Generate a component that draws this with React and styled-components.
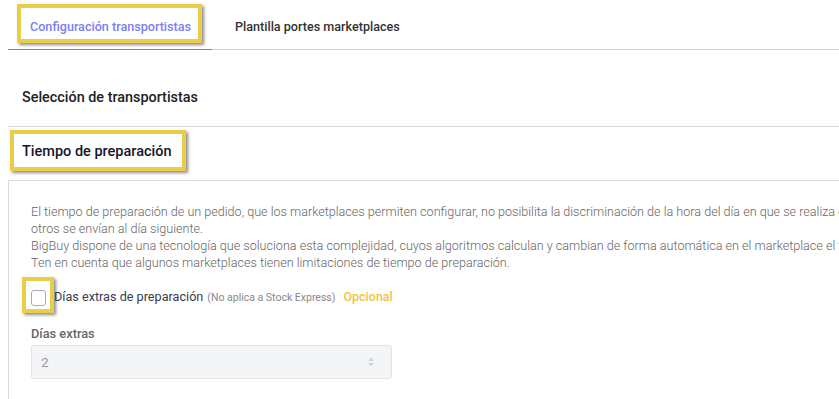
import React from "react";
import styled, { createGlobalStyle } from "styled-components";

const Global = createGlobalStyle`
  html, body { margin: 0; padding: 0; background: #fff; overflow: hidden; }
  body { font-family: Roboto, "Noto Sans", Arial, sans-serif; }
`;

const Page = styled.div`
  padding-left: 8px;
  width: 831px;
`;

const TabBar = styled.div`
  display: flex;
  align-items: flex-start;
  height: 49px;
  border-bottom: 1px solid #cfcfcf;
`;

const Tab = styled.div`
  box-sizing: border-box;
  height: 50px;
  padding: ${(p) => (p.$active ? "4px 0 0 9px" : "17px 0 0 23px")};
  width: ${(p) => (p.$active ? "204px" : "auto")};
  border-bottom: ${(p) => (p.$active ? "1px solid #5f86ee" : "none")};
  font-size: 12.6px;
  font-weight: 500;
  line-height: 20px;
  color: ${(p) => (p.$active ? "#7b80f4" : "#333")};
  white-space: nowrap;
`;

const Mark = styled.div`
  display: inline-flex;
  box-sizing: border-box;
  border: 4px solid #ebcd4b;
  box-shadow: 2px 2px 3px rgba(0, 0, 0, 0.45);
  background: #fff;
`;

const TabMark = styled(Mark)`
  height: 39px;
  padding: 9px 7px 0 9px;
`;

const SectionTitle = styled.div`
  padding: 38px 0 18px 14px;
  border-bottom: 1px solid #d6d6d6;
  font-size: 14.4px;
  font-weight: 500;
  line-height: 20px;
  color: #222;
`;

const SectionHead = styled.div`
  padding: 3px 0 9px 2px;
`;

const HeadMark = styled(Mark)`
  height: 41px;
  padding: 8px 10px 0 8px;
  font-size: 14.5px;
  font-weight: 500;
  line-height: 20px;
  color: #15152a;
`;

const Card = styled.div`
  width: 1400px;
  border: 1px solid #dcdcdc;
  border-right: none;
  padding: 22px 0 40px 22px;
`;

const Para = styled.div`
  font-size: 12.6px;
  font-weight: 300;
  line-height: 17px;
  color: #666;
  white-space: nowrap;
`;

const Line = styled.div``;

const CheckRow = styled.div`
  display: flex;
  align-items: flex-start;
  margin-top: 6px;
  margin-left: -9px;
`;

const CheckMark = styled(Mark)`
  width: 32px;
  height: 36px;
  padding: 9px 4px 3px 5px;
`;

const Box = styled.div`
  box-sizing: border-box;
  width: 15px;
  height: 16px;
  border: 1px solid #a9a9c2;
  border-radius: 3px;
  background: #fff;
`;

const CheckLabel = styled.div`
  padding-top: 10px;
  font-size: 12.65px;
  line-height: 20px;
  color: #3b3b4b;
  white-space: nowrap;
`;

const Note = styled.span`
  font-size: 10.5px;
  color: #888;
  margin-left: 4px;
`;

const Optional = styled.span`
  font-size: 12.5px;
  font-weight: 500;
  color: #efc43f;
  margin-left: 8px;
`;

const FieldLabel = styled.div`
  margin-top: 12px;
  font-size: 12.8px;
  font-weight: 500;
  line-height: 17px;
  color: #666;
`;

const FakeInput = styled.div`
  box-sizing: border-box;
  margin-top: 3px;
  width: 361px;
  height: 34px;
  display: flex;
  align-items: center;
  justify-content: space-between;
  padding: 0 17px 0 9px;
  border: 1px solid #e1e3e7;
  border-radius: 3px;
  background: #f4f5f7;
  font-size: 13.5px;
  color: #9a9a9a;
`;

const Spinner = () => (
  <svg width="6" height="10" viewBox="0 0 6 10">
    <path d="M3 0.5 L5.8 4 L0.2 4 Z" fill="#cfd1d5" />
    <path d="M3 9.5 L5.8 6 L0.2 6 Z" fill="#cfd1d5" />
  </svg>
);

export default function App() {
  return (
    <>
      <Global />
      <Page>
        <TabBar>
          <Tab $active>
            <TabMark>Configuración transportistas</TabMark>
          </Tab>
          <Tab>Plantilla portes marketplaces</Tab>
        </TabBar>
        <SectionTitle>Selección de transportistas</SectionTitle>
        <SectionHead>
          <HeadMark>Tiempo de preparación</HeadMark>
        </SectionHead>
        <Card>
          <Para>
            <Line>
              El tiempo de preparación de un pedido, que los marketplaces permiten configurar, no posibilita la discriminación de la hora del día en que se realiza el pedido, por lo que unos pedidos se envían el mismo día y
            </Line>
            <Line>otros se envían al día siguiente.</Line>
            <Line>
              BigBuy dispone de una tecnología que soluciona esta complejidad, cuyos algoritmos calculan y cambian de forma automática en el marketplace el tiempo de preparación.
            </Line>
            <Line>
              Ten en cuenta que algunos marketplaces tienen limitaciones de tiempo de preparación.
            </Line>
          </Para>
          <CheckRow>
            <CheckMark>
              <Box />
            </CheckMark>
            <CheckLabel>
              Días extras de preparación
              <Note>(No aplica a Stock Express)</Note>
              <Optional>Opcional</Optional>
            </CheckLabel>
          </CheckRow>
          <FieldLabel>Días extras</FieldLabel>
          <FakeInput>
            <span>2</span>
            <Spinner />
          </FakeInput>
        </Card>
      </Page>
    </>
  );
}
